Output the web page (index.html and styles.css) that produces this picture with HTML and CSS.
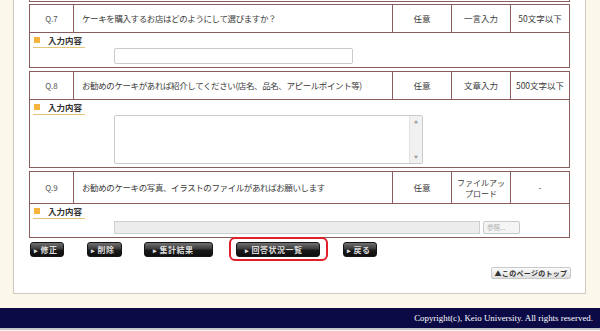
FILE: index.html
```html
<!DOCTYPE html>
<html lang="ja">
<head>
<meta charset="utf-8">
<title>アンケート確認</title>
<link rel="stylesheet" href="styles.css">
</head>
<body>
<div class="panel">
  <div class="prev"></div>

  <div class="qblock">
    <div class="qrow">
      <div class="c no">Q.7</div>
      <div class="c text">ケーキを購入するお店はどのようにして選びますか？</div>
      <div class="c mid">任意</div>
      <div class="c mid">一言入力</div>
      <div class="c mid">50文字以下</div>
    </div>
    <div class="ans">
      <div class="ah"><span class="sq"></span>入力内容</div>
      <div class="field"><div class="input"></div></div>
    </div>
  </div>

  <div class="qblock">
    <div class="qrow">
      <div class="c no">Q.8</div>
      <div class="c text">お勧めのケーキがあれば紹介してください(店名、品名、アピールポイント等)</div>
      <div class="c mid">任意</div>
      <div class="c mid">文章入力</div>
      <div class="c mid">500文字以下</div>
    </div>
    <div class="ans">
      <div class="ah"><span class="sq"></span>入力内容</div>
      <div class="field">
        <div class="textarea">
          <div class="scroll"><span class="arr">▲</span><span class="arr">▼</span></div>
        </div>
      </div>
    </div>
  </div>

  <div class="qblock">
    <div class="qrow tall">
      <div class="c no">Q.9</div>
      <div class="c text">お勧めのケーキの写真、イラストのファイルがあればお願いします</div>
      <div class="c mid">任意</div>
      <div class="c mid two">ファイルアッ<br>プロード</div>
      <div class="c mid">-</div>
    </div>
    <div class="ans">
      <div class="ah"><span class="sq"></span>入力内容</div>
      <div class="field file-field">
        <div class="file"></div>
        <div class="browse">参照...</div>
      </div>
    </div>
  </div>

  <div class="actions">
    <a class="btn w34 g23"><span class="tri">▸</span>修正</a>
    <a class="btn w35 g22"><span class="tri">▸</span>削除</a>
    <a class="btn wide w69 g23"><span class="tri">▸</span>集計結果</a>
    <span class="mark g23"><a class="btn wide w84"><span class="tri">▸</span>回答状況一覧</a></span>
    <a class="btn w34"><span class="tri">▸</span>戻る</a>
  </div>

  <div class="toprow">
    <a class="topbtn">▲このページのトップ</a>
  </div>
</div>
<div class="footer">Copyright(c), Keio University. All rights reserved.</div>
<div class="bottomline"></div>
</body>
</html>
```

FILE: styles.css
```css
html, body {
  margin: 0;
  padding: 0;
}
body {
  width: 600px;
  height: 331px;
  overflow: hidden;
  background: #fcf7eb;
  font-family: "Noto Sans CJK JP", "Noto Sans", sans-serif;
  color: #333;
}
.panel {
  box-sizing: border-box;
  margin-left: 13px;
  width: 573px;
  background: #fff;
  border: 1px solid #cdc9c0;
  border-top: none;
  padding: 0 15px 14px 15px;
}
.prev {
  height: 1px;
  border: 1px solid #8a5e5e;
  border-top: none;
  margin-bottom: 2px;
}
.qblock {
  margin-bottom: 3px;
}
.qrow {
  display: grid;
  grid-template-columns: 44px 319px 59px 59px 59px;
  border-top: 1px solid #8a5e5e;
  border-left: 1px solid #8a5e5e;
}
.c {
  box-sizing: border-box;
  height: 28px;
  border-right: 1px solid #8a5e5e;
  border-bottom: 1px solid #8a5e5e;
  display: flex;
  align-items: center;
  font-size: 8.5px;
  line-height: 11px;
  color: #3a3a3a;
}
.tall .c {
  height: 32px;
}
.no {
  justify-content: center;
  font-size: 8px;
  color: #555;
}
.text {
  padding-left: 8px;
  letter-spacing: -0.4px;
  white-space: nowrap;
}
.mid {
  justify-content: center;
  text-align: center;
}
.two {
  font-size: 8px;
  line-height: 11px;
}
.ans {
  border: 1px solid #8a5e5e;
  border-top: none;
  padding-bottom: 3px;
}
.ah {
  box-sizing: border-box;
  margin-left: 3px;
  width: 52px;
  height: 15px;
  border-bottom: 1px solid #e6c47c;
  display: flex;
  align-items: center;
  font-size: 8.5px;
  font-weight: bold;
  color: #333;
}
.sq {
  width: 6px;
  height: 6px;
  background: #f4b43e;
  margin-left: 1px;
  margin-right: 8px;
}
.field {
  padding-left: 84px;
}
.input {
  box-sizing: border-box;
  width: 239px;
  height: 16px;
  border: 1px solid #cacaca;
  border-radius: 2px;
  background: #fff;
}
.textarea {
  box-sizing: border-box;
  width: 309px;
  height: 49px;
  border: 1px solid #cacaca;
  border-radius: 2px;
  background: #fff;
  display: flex;
  justify-content: flex-end;
}
.scroll {
  width: 12px;
  background: #f1f1f1;
  border-left: 1px solid #e2e2e2;
  display: flex;
  flex-direction: column;
  justify-content: space-between;
  align-items: center;
  padding: 4px 0 3px;
}
.arr {
  font-size: 4px;
  line-height: 5px;
  color: #999;
}
.file-field {
  display: flex;
  margin-top: 2px;
}
.file {
  box-sizing: border-box;
  width: 366px;
  height: 13px;
  background: #ececec;
  border: 1px solid #cfcfcf;
}
.browse {
  box-sizing: border-box;
  margin-left: 3px;
  width: 37px;
  height: 13px;
  border: 1px solid #c9c9c9;
  border-radius: 2px;
  background: #f5f5f5;
  font-size: 6.5px;
  line-height: 11px;
  color: #b0b0b0;
  padding-left: 3px;
}
.actions {
  display: flex;
  align-items: center;
  margin-top: 4px;
  padding-left: 1px;
}
.btn {
  box-sizing: border-box;
  height: 15px;
  display: flex;
  align-items: center;
  padding-left: 3px;
  border: 1px solid #151515;
  border-radius: 3px;
  background: linear-gradient(#707070 0%, #3a3a3a 45%, #1a1a1a 55%, #0e0e0e 100%);
  color: #dcdcdc;
  font-size: 8px;
  font-weight: bold;
  letter-spacing: 0.5px;
  text-decoration: none;
}
.btn.wide {
  padding-left: 8px;
}
.tri {
  font-size: 7px;
  margin-right: 2px;
  color: #ddd;
}
.w34 { width: 34px; }
.w35 { width: 35px; }
.w69 { width: 69px; }
.w84 { width: 84px; }
.g22 { margin-right: 22px; }
.g23 { margin-right: 23px; }
.mark {
  position: relative;
  display: block;
}
.mark::after {
  content: "";
  position: absolute;
  left: -7px;
  right: -8px;
  top: -5px;
  bottom: -4px;
  border: 2px solid #e01f2a;
  border-radius: 6px;
}
.toprow {
  display: flex;
  justify-content: flex-end;
  margin-top: 10px;
  margin-right: -1px;
}
.topbtn {
  box-sizing: border-box;
  width: 80px;
  height: 12px;
  border: 1px solid #c9c9c9;
  border-radius: 2px;
  background: linear-gradient(#fbfbfb, #dedede);
  font-size: 7px;
  font-weight: bold;
  line-height: 10px;
  color: #333;
  text-align: center;
  letter-spacing: 0.3px;
}
.footer {
  margin-top: 14px;
  height: 20px;
  background: #0b0a46;
  color: #fff;
  font-family: "Liberation Serif", serif;
  font-size: 8.9px;
  line-height: 20px;
  text-align: right;
  padding-right: 7px;
}
.bottomline {
  height: 2px;
  background: #c6c6cc;
}
```
